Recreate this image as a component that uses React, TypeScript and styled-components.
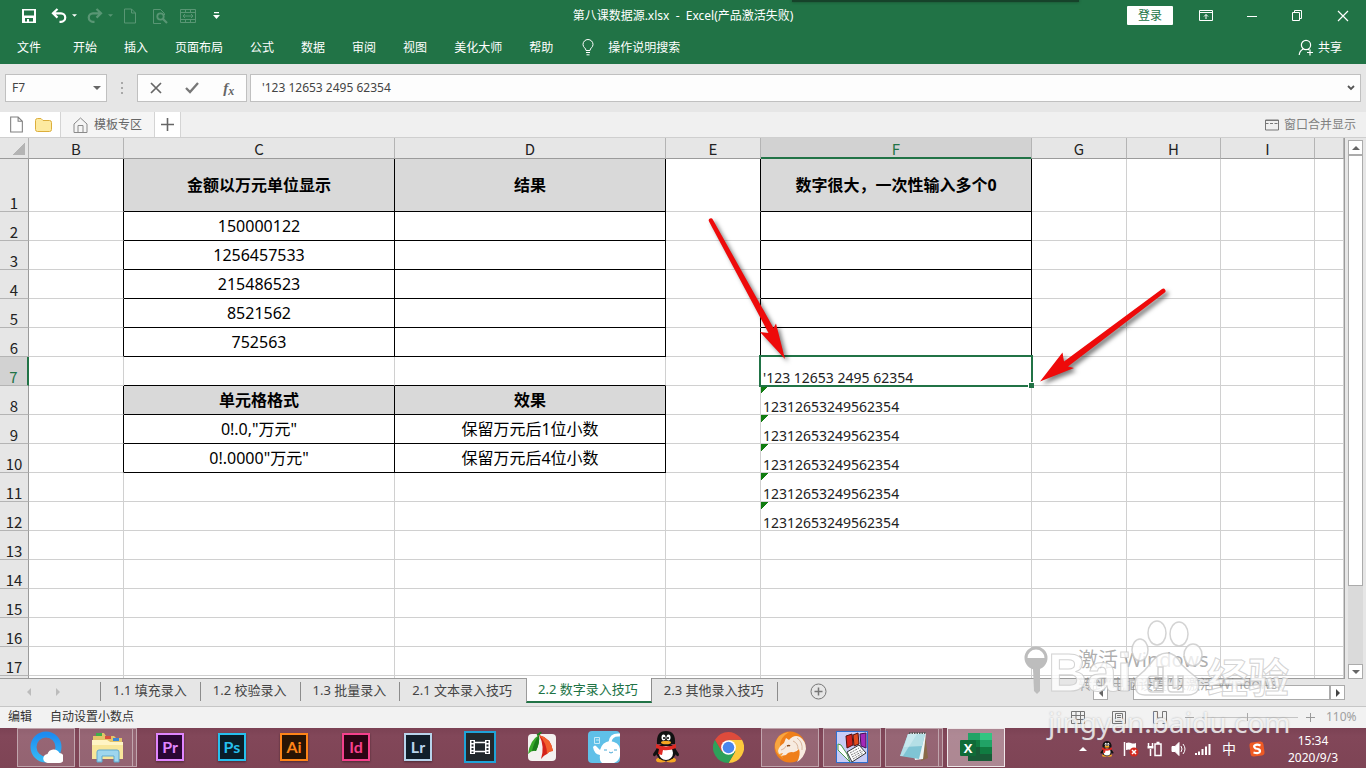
import React from "react";
import styled, { createGlobalStyle, css } from "styled-components";

const sans = '"Noto Sans", "Noto Sans CJK SC", sans-serif';
const green = "#217346";

const Global = createGlobalStyle`
  *, *::before, *::after { box-sizing: border-box; }
  html, body { margin: 0; }
  body { font-family: ${sans}; font-size: 12px; line-height: 16px; overflow: hidden; }
  button, input { font: inherit; color: inherit; }
  button { background: none; border: 0; padding: 0; margin: 0; white-space: nowrap; }
  svg { display: block; flex: none; }
`;

const Screen = styled.div`
  display: flex;
  flex-direction: column;
  height: 100vh;
  position: relative;
  overflow: hidden;
`;

/* ---------- title bar and ribbon tabs ---------- */

const Ribbon = styled.header`
  flex: none;
  background: ${green};
  color: #fff;
`;

const DockedShadow = styled.div`
  position: absolute;
  top: 0;
  left: 58%;
  width: 21%;
  height: 2px;
  background: #16422a;
  box-shadow: 0 0 3px #16422a;
`;

const TitleRow = styled.div`
  display: grid;
  grid-template-columns: 1fr auto 1fr;
  align-items: center;
  height: 31px;
`;

const QuickAccess = styled.div`
  display: flex;
  align-items: center;
  padding-left: 21px;
`;

const QuickButton = styled.button<{ $dim?: boolean; $gap: number }>`
  display: flex;
  align-items: center;
  gap: 5px;
  margin-right: ${(p) => p.$gap}px;
  opacity: ${(p) => (p.$dim ? 0.25 : 1)};
`;

const Title = styled.h1`
  margin: 0;
  font-size: 12px;
  line-height: 16px;
  font-weight: 400;
  white-space: pre;
`;

const WindowControls = styled.div`
  display: flex;
  align-items: center;
  justify-content: flex-end;
  padding-right: 17px;
  gap: 34px;
`;

const SignIn = styled.button`
  background: #fff;
  color: ${green};
  width: 46px;
  height: 19px;
  line-height: 18px;
  border-radius: 1px;
  margin-right: -8px;
`;

const TabRow = styled.nav`
  display: flex;
  align-items: center;
  height: 33px;
  padding: 0 24px 0 17px;
  gap: 27px;
`;

const RibbonTab = styled.button<{ $file?: boolean }>`
  color: #fff;
  margin-right: ${(p) => (p.$file ? 5 : 0)}px;
`;

const IconLabel = styled.button<{ $end?: boolean; $gap: number }>`
  display: flex;
  align-items: center;
  gap: ${(p) => p.$gap}px;
  margin-left: ${(p) => (p.$end ? "auto" : "2px")};
`;

/* ---------- formula bar ---------- */

const FormulaRow = styled.div`
  flex: none;
  display: flex;
  align-items: center;
  height: 48px;
  padding: 0 5px;
  background: #e6e6e6;
  color: #444;
`;

const Field = styled.div<{ $grow?: boolean; $width?: number }>`
  display: flex;
  align-items: center;
  height: 28px;
  background: #fdfdfd;
  border: 1px solid #c0c0c0;
  ${(p) => (p.$grow ? "flex: 1;" : `width: ${p.$width}px;`)}
`;

const FieldInput = styled.input<{ $pad: number }>`
  flex: 1;
  min-width: 0;
  border: 0;
  outline: 0;
  background: none;
  font-size: 12px;
  padding: 0 0 0 ${(p) => p.$pad}px;
`;

const FieldCaret = styled.button`
  padding: 0 5px;
`;

const Grip = styled.span`
  display: grid;
  gap: 3px;
  margin: 0 14px;
  i { width: 2px; height: 2px; background: #a8a8a8; }
`;

const FormulaButtons = styled(Field)`
  justify-content: space-around;
  margin-right: 3px;
`;

/* ---------- document tabs ---------- */

const DocRow = styled.div`
  flex: none;
  display: flex;
  align-items: stretch;
  height: 26px;
  background: #f0f0f0;
  border-bottom: 1px solid #cfcfcf;
  color: #666;
`;

const DocCell = styled.button<{ $width?: number; $white?: boolean }>`
  display: flex;
  align-items: center;
  justify-content: center;
  gap: 6px;
  width: ${(p) => p.$width}px;
  background: ${(p) => (p.$white ? "#fff" : "#f5f5f5")};
  border-right: 1px solid #d4d4d4;
`;

const FileCell = styled.div`
  display: flex;
  align-items: center;
  gap: 10px;
  padding: 0 8px;
  background: #fff;
  border-right: 1px solid #d4d4d4;
`;

const MergeWindows = styled.button`
  display: flex;
  align-items: center;
  gap: 5px;
  margin-left: auto;
  margin-right: 10px;
  color: #808080;
`;

/* ---------- worksheet ---------- */

const SheetArea = styled.main`
  position: relative;
  flex: 1;
  min-height: 0;
  display: flex;
  background: #e6e6e6;
`;

const GridClip = styled.div`
  flex: 1;
  min-width: 0;
  overflow: hidden;
  border-bottom: 1px solid #9b9b9b;
  border-right: 1px solid #9b9b9b;
`;

const Grid = styled.table`
  width: 100%;
  table-layout: fixed;
  border-collapse: separate;
  border-spacing: 0;
  background: #fff;
  td, th { padding: 0; overflow: visible; white-space: nowrap; }
`;

const headFont = css`
  font-family: "Noto Sans CJK SC", sans-serif;
  font-size: 15px;
  line-height: 17px;
  font-weight: 400;
  color: #222;
`;

const ColHead = styled.th<{ $active?: boolean }>`
  ${headFont}
  height: 21px;
  background: ${(p) => (p.$active ? "#d2d2d2" : "#e6e6e6")};
  border-right: 1px solid #b4b4b4;
  border-bottom: 1px solid ${(p) => (p.$active ? green : "#9b9b9b")};
  box-shadow: ${(p) => (p.$active ? `inset 0 -1px ${green}` : "none")};
  color: ${(p) => (p.$active ? green : "#222")};
`;

const Corner = styled(ColHead)`
  background: linear-gradient(135deg, transparent 50%, #b4b4b4 50%) 12px 4px / 13px 13px no-repeat #e6e6e6;
`;

const RowHead = styled.th<{ $active?: boolean }>`
  ${headFont}
  vertical-align: bottom;
  text-align: center;
  background: ${(p) => (p.$active ? "#d2d2d2" : "#e6e6e6")};
  border-bottom: 1px solid #b4b4b4;
  border-right: ${(p) => (p.$active ? `2px solid ${green}` : "1px solid #9b9b9b")};
  color: ${(p) => (p.$active ? green : "#222")};
`;

const Row = styled.tr<{ $tall?: boolean }>`
  height: ${(p) => (p.$tall ? 53 : 29)}px;
`;

type CellProps = { $right?: boolean; $bottom?: boolean; $kind?: string; $flag?: boolean };

const Cell = styled.td<CellProps>`
  position: relative;
  color: #000;
  font-size: 16px;
  line-height: 20px;
  text-align: center;
  vertical-align: middle;
  border-right: 1px solid ${(p) => (p.$right ? "#000" : "#d0d0d0")};
  border-bottom: 1px solid ${(p) => (p.$bottom ? "#000" : "#d0d0d0")};
  ${(p) => p.$kind === "title" && css`background: #d9d9d9; font-weight: 700;`}
  ${(p) =>
    p.$kind === "text" &&
    css`
      && { padding-left: 2px; }
      color: #222;
      font-size: 14px;
      line-height: 15px;
      text-align: left;
      vertical-align: bottom;
    `}
  ${(p) =>
    p.$flag &&
    css`background: linear-gradient(135deg, #107c10 50%, transparent 50%) 0 0 / 8px 8px no-repeat;`}
`;

const Selection = styled.span`
  position: absolute;
  inset: -2px;
  border: 2px solid ${green};
  z-index: 1;
  &::after {
    content: "";
    position: absolute;
    right: -3px;
    bottom: -3px;
    width: 6px;
    height: 6px;
    background: ${green};
    border: solid #fff;
    border-width: 1px 0 0 1px;
  }
`;

const Annotations = styled.svg`
  position: absolute;
  left: 0;
  top: 0;
  z-index: 2;
  filter: drop-shadow(3px 3px 2px rgba(0, 0, 0, 0.5));
`;

const VScroll = styled.div`
  display: flex;
  flex-direction: column;
  width: 21px;
  padding: 2px 3px 0;
`;

const ScrollButton = styled.button`
  flex: none;
  display: grid;
  place-items: center;
  width: 15px;
  height: 15px;
  background: #fff;
  border: 1px solid #ababab;
`;

const VThumb = styled.div`
  flex: 431;
  background: #fff;
  border: 1px solid #ababab;
`;

const VTrack = styled.div`
  flex: 78;
  background: #dadada;
`;

/* ---------- sheet tabs ---------- */

const SheetTabs = styled.div`
  flex: none;
  display: flex;
  align-items: flex-start;
  height: 28px;
  background: #e6e6e6;
  border-bottom: 1px solid #c6c6c6;
`;

const TabNav = styled.div`
  display: flex;
  align-items: center;
  gap: 21px;
  width: 101px;
  height: 19px;
  margin-top: 3px;
  padding-left: 25px;
  border-right: 1px solid #8c8c8c;
`;

const SheetTab = styled.button<{ $active?: boolean; $bare?: boolean }>`
  position: relative;
  font-size: 13px;
  line-height: 16px;
  color: #444;
  height: 19px;
  margin-top: 3px;
  padding: 0 13px 3px 12px;
  border-right: 1px solid ${(p) => (p.$bare ? "transparent" : "#8c8c8c")};
  ${(p) =>
    p.$active &&
    css`
      z-index: 1;
      height: 25px;
      margin-top: -1px;
      color: ${green};
      background: #fff;
      border-left: 1px solid #9b9b9b;
      border-bottom: 2px solid ${green};
      padding: 0 13px 1px 11px;
    `}
`;

const AddSheet = styled.button`
  margin: 4px 0 0 32px;
`;

const HScroll = styled.div`
  display: flex;
  width: 252px;
  margin: 6px 21px 0 auto;
`;

const HTrack = styled.div`
  width: 25px;
`;

const HThumb = styled.div`
  flex: 1;
  background: #fff;
  border: 1px solid #ababab;
`;

/* ---------- status bar ---------- */

const StatusBar = styled.footer`
  flex: none;
  display: flex;
  align-items: center;
  height: 21px;
  padding: 0 8px 1px;
  background: #f2f2f2;
  color: #333;
`;

const StatusText = styled.span`
  margin-right: 18px;
`;

const ViewButtons = styled.div`
  display: flex;
  gap: 27px;
  margin-left: auto;
  margin-right: 18px;
`;

const Zoom = styled.div`
  display: flex;
  align-items: center;
  gap: 8px;
  color: #a0a0a0;
`;

const ZoomSlider = styled.input`
  appearance: none;
  width: 96px;
  height: 12px;
  margin: 0;
  background: linear-gradient(#c4c4c4, #c4c4c4) 0 6px / 100% 1px no-repeat;
  &::-webkit-slider-thumb {
    appearance: none;
    width: 1px;
    height: 8px;
    background: #aaa;
  }
`;

const ZoomValue = styled.span`
  width: 32px;
  margin-left: 3px;
`;

/* ---------- Windows taskbar ---------- */

const Taskbar = styled.div`
  flex: none;
  display: flex;
  height: 40px;
  padding: 0 11px 0 15px;
  background: linear-gradient(#7b4254, #824759 20%, #7e4455);
  color: #fff;
`;

const Task = styled.button<{ $open?: boolean; $front?: boolean; $stack?: boolean }>`
  position: relative;
  display: grid;
  place-items: center;
  width: 58px;
  height: 39px;
  margin: 0 2px;
  padding-bottom: 1px;
  border: 1px solid transparent;
  ${(p) => p.$open && "background: rgba(255,255,255,0.17); border-color: rgba(255,255,255,0.42);"}
  ${(p) => p.$front && "background: rgba(255,255,255,0.36); border-color: rgba(255,255,255,0.8);"}
  ${(p) =>
    p.$stack &&
    css`
      &::after {
        content: "";
        position: absolute;
        top: 0;
        bottom: 0;
        right: 3px;
        border-right: 1px solid rgba(255, 255, 255, 0.42);
      }
    `}
`;

const AdobeTile = styled.span<{ $tint: string; $fill: string }>`
  display: grid;
  place-items: center;
  width: 28px;
  height: 28px;
  background: ${(p) => p.$fill};
  border: 2px solid ${(p) => p.$tint};
  color: ${(p) => p.$tint};
  font-family: Lato, sans-serif;
  font-weight: 700;
  font-size: 16px;
  line-height: 20px;
  padding-bottom: 1px;
  box-shadow: 0 1px 2px rgba(0, 0, 0, 0.4);
`;

const Tray = styled.div`
  display: flex;
  align-items: center;
  margin-left: auto;
  padding-top: 2px;
`;

const TrayItem = styled.button<{ $wide?: boolean }>`
  display: grid;
  place-items: center;
  width: ${(p) => (p.$wide ? 28 : 24)}px;
  height: 24px;
  font-size: 14px;
`;

const Clock = styled.div`
  width: 84px;
  text-align: center;
  line-height: 17px;
`;

/* ---------- watermarks ---------- */

const Activation = styled.div`
  position: absolute;
  right: 64px;
  bottom: 74px;
  display: flex;
  color: rgba(120, 120, 120, 0.6);
  pointer-events: none;
  z-index: 3;
`;

const ActivationText = styled.div`
  margin-left: 30px;
  white-space: nowrap;
  width: 224px;
  font-size: 14px;
  line-height: 20px;
`;

const ActivationTitle = styled.div`
  font-size: 20px;
  line-height: 28px;
`;

const Brand = styled.div`
  position: absolute;
  right: 73px;
  bottom: 28px;
  width: 245px;
  color: rgba(255, 255, 255, 0.8);
  pointer-events: none;
  z-index: 4;
`;

const BrandName = styled.div`
  display: flex;
  align-items: flex-end;
  height: 80px;
  padding-right: 4px;
  margin-bottom: 5px;
  -webkit-text-stroke: 1px rgba(200, 200, 200, 0.8);
`;

const BrandLatin = styled.span`
  font: 700 54px/54px "Liberation Sans", sans-serif;
`;

const BrandHan = styled.span`
  margin-left: auto;
  font: 700 41px/48px "Noto Sans CJK SC", sans-serif;
`;

const BrandUrl = styled.div`
  font-size: 28px;
  line-height: 36px;
  text-shadow: 0 0 2px rgba(120, 120, 120, 0.55);
`;

/* ---------- icons ---------- */

type TriProps = { dir: "up" | "down" | "left" | "right"; size?: number; color?: string };
const triPaths = {
  up: "M0 6 4 2l4 4z",
  down: "M0 2h8L4 6z",
  left: "M6 0v8L2 4z",
  right: "M2 0v8l4-4z",
};
const Tri = ({ dir, size = 8, color = "currentColor" }: TriProps) => (
  <svg width={size} height={size} viewBox="0 0 8 8"><path d={triPaths[dir]} fill={color} /></svg>
);

const SaveIcon = () => (
  <svg width="16" height="16" viewBox="0 0 16 16">
    <path fillRule="evenodd" fill="#fff" d="M1 1h14v14H1zM3 2.500v5h10v-5zM4 10v3.500h2V11h2v2.500h4V10z" />
  </svg>
);
const UndoIcon = ({ flip }: { flip?: boolean }) => (
  <svg width="16" height="16" viewBox="0 0 16 16">
    <g fill="none" stroke="#fff" strokeWidth="2.200" transform={flip ? "matrix(-1 0 0 1 16 0)" : undefined}>
      <path d="M6.500 1 2 5.300l4.500 4.300M2.500 5.300H10a4 4 0 0 1 0 8.500H8.500" />
    </g>
  </svg>
);
const PageIcon = ({ color = "#fff", size = 16 }: { color?: string; size?: number }) => (
  <svg width={size} height={size} viewBox="0 0 16 16" fill="none" stroke={color}>
    <path d="M2.500 1h7l4 4v10h-11zM9.500 1v4h4" />
  </svg>
);
const PreviewIcon = () => (
  <svg width="16" height="16" viewBox="0 0 16 16" fill="none" stroke="#fff">
    <path d="M9 15.500H1.500v-14h7l4 4V7" /><circle cx="8.500" cy="8.500" r="3.200" strokeWidth="1.800" /><path d="m11 11 4 4" strokeWidth="2.200" />
  </svg>
);
const FitIcon = () => (
  <svg width="16" height="16" viewBox="0 0 16 16" fill="none" stroke="#fff">
    <path d="M.5 1.500h15v13H.5zM.5 4.500h15M.5 11.500h15M5.500 1.500v3M10.500 1.500v3M5.500 11.500v3M10.500 11.500v3M3 8h10M5 6 3 8l2 2M11 6l2 2-2 2" />
  </svg>
);
const CustomizeIcon = () => (
  <svg width="7" height="8" viewBox="0 0 7 8" fill="#fff"><path d="M1 0h5v1.200H1zM0 3h7L3.500 7z" /></svg>
);
const RibbonOptionsIcon = () => (
  <svg width="14" height="12" viewBox="0 0 14 12" fill="none" stroke="#fff">
    <path d="M.5.5h13v10H.5zM.5 2.500h13M7 9V4.500M5 6.500l2-2 2 2" />
  </svg>
);
const MinIcon = () => <svg width="11" height="12" viewBox="0 0 11 12"><path d="M0 6.500h10" stroke="#fff" /></svg>;
const RestoreIcon = () => (
  <svg width="11" height="11" viewBox="0 0 11 11" fill="none" stroke="#fff"><path d="M.5 2.500h7v8h-7zM2.500 2.500v-2h7v8h-2" /></svg>
);
const CloseIcon = () => (
  <svg width="12" height="12" viewBox="0 0 12 12"><path d="m1 1 10 10M11 1 1 11" stroke="#fff" strokeWidth="1.200" /></svg>
);
const BulbIcon = () => (
  <svg width="12" height="17" viewBox="0 0 12 17" fill="none" stroke="#fff">
    <path d="M4 11.500C4 9 1 8.500 1 5.500a5 5 0 0 1 10 0c0 3-3 3.500-3 6zM4 13.500h4M4.500 15.800h3" />
  </svg>
);
const ShareIcon = () => (
  <svg width="16" height="17" viewBox="0 0 16 17" fill="none" stroke="#fff" strokeWidth="1.200">
    <circle cx="8" cy="6" r="4.600" /><path d="M1.200 16c.3-3.500 2-5 4-6M10 10l1 1M12 10.500v6M9 13.500h6" />
  </svg>
);
const CancelIcon = () => <svg width="12" height="12" viewBox="0 0 12 12"><path d="m1 1 10 10M11 1 1 11" stroke="#666" strokeWidth="1.700" /></svg>;
const CheckIcon = () => <svg width="14" height="12" viewBox="0 0 14 12"><path d="m1 6 4 4 8-9" fill="none" stroke="#777" strokeWidth="2.300" /></svg>;
const FxGlyph = styled.i`
  font: italic 700 15px/16px "Liberation Serif", serif;
  color: #666;
  sub { font-size: 12px; vertical-align: -2px; line-height: 0; }
`;
const ChevronIcon = () => <svg width="8" height="6" viewBox="0 0 8 6"><path d="m1 1 3 3 3-3" fill="none" stroke="#555" strokeWidth="1.800" /></svg>;
const FolderIcon = () => (
  <svg width="17" height="14" viewBox="0 0 17 14"><path d="M.5 2.500q0-2 2-2h3.500l2 2h6.500q2 0 2 2v7q0 2-2 2h-12q-2 0-2-2z" fill="#fdeaa0" stroke="#dcae3c" /></svg>
);
const HomeIcon = () => (
  <svg width="15" height="16" viewBox="0 0 15 16" fill="none" stroke="#8a8a8a"><path d="m1 7 6.500-6L14 7v8.500H1zM5 15.500v-7h5v7" /></svg>
);
const PlusIcon = () => <svg width="13" height="13" viewBox="0 0 13 13"><path d="M6.500 0v13M0 6.500h13" stroke="#666" strokeWidth="1.600" /></svg>;
const MergeIcon = () => (
  <svg width="14" height="12" viewBox="0 0 14 12" fill="none" stroke="#777"><path d="M.5 1v10h13V1zM.5 1.500h13" /><path d="M.5 4.500h13" strokeDasharray="3 1.500" /></svg>
);
const AddIcon = () => (
  <svg width="17" height="17" viewBox="0 0 17 17" fill="none" stroke="#777"><circle cx="8.500" cy="8.500" r="7.500" /><path d="M8.500 4.500v8M4.500 8.500h8" strokeWidth="1.500" /></svg>
);
const NormalViewIcon = () => (
  <svg width="14" height="13" viewBox="0 0 14 13" fill="none" stroke="#777"><path d="M.5.5h13v12H.5zM.5 4.500h13M.5 8.500h13M5 .5v12M9.500.5v12" /></svg>
);
const LayoutViewIcon = () => (
  <svg width="14" height="13" viewBox="0 0 14 13" fill="none" stroke="#777"><path d="M.5.5h13v12H.5zM3.500 2.500h7v8h-7zM5 4.500h4M5 6.500h4M5 8.500h4" /></svg>
);
const BreakViewIcon = () => (
  <svg width="14" height="13" viewBox="0 0 14 13" fill="none" stroke="#777"><path d="M.5 12V.5h4V7h5V.5h4V12M.5 12.500h4M9.500 12.500h4" /></svg>
);

const CloudRingIcon = () => (
  <svg width="34" height="34" viewBox="0 0 34 34">
    <defs><linearGradient id="ring" x2="0" y2="1"><stop offset="0" stopColor="#1d8cf0" /><stop offset="1" stopColor="#35b8f5" /></linearGradient></defs>
    <circle cx="17" cy="17" r="12.500" fill="none" stroke="url(#ring)" strokeWidth="6" />
    <path d="M19 33a4.500 4.500 0 0 1-.5-9 6.500 6.500 0 0 1 12-1 5 5 0 0 1-.5 10z" fill="#fff" />
  </svg>
);
const ExplorerIcon = () => (
  <svg width="34" height="32" viewBox="0 0 34 32">
    <path d="M2 5h3V2h8l2 3h8l2 2h6v20H2z" fill="#e4c368" />
    <path d="M5 2h6v3H5z" fill="#3fae49" /><path d="M14 5h6v3h-6z" fill="#d9503f" /><path d="M22 7h6v3h-6z" fill="#3c87d4" />
    <path d="M1 9h15l3 2h13v17H1z" fill="#f8e69a" /><path d="M1 9h15l3 2h13v3H1z" fill="#fff4c4" />
    <path d="M6 31V21q0-2 2-2h18q2 0 2 2v10h-5v-6H11v6z" fill="#9ed6ee" stroke="#5fa9cf" />
  </svg>
);
const FilmIcon = () => (
  <svg width="32" height="32" viewBox="0 0 32 32">
    <rect x="1" y="1" width="30" height="30" fill="#22282c" stroke="#1fa3d8" strokeWidth="2" />
    <path d="M8 11.500h16M8 20.500h16" stroke="#fff" strokeWidth="1.500" />
    <path d="M6 9h5v14H6zM21 9h5v14h-5z" fill="#fff" />
    <path d="M8.500 10v12M23.500 10v12" stroke="#22282c" strokeWidth="2" strokeDasharray="2 1.500" />
  </svg>
);
const UmbrellaIcon = () => (
  <svg width="30" height="30" viewBox="0 0 30 30">
    <rect x="1" y="2" width="28" height="27" rx="4" fill="#f4f2f0" />
    <path d="M12 3Q3 8 1 22q4-4 8-3 4-8 3-16z" fill="#3aa82c" />
    <path d="M12 3Q7 10 5 19q2-1 4 0 4-8 3-16z" fill="#1d7d1c" />
    <path d="M12 3q12 3 14 16-4 0-6 3-3 1-6 5Q18 14 12 3z" fill="#d4231a" />
    <path d="M12 3q12 3 14 16-4 0-6 3Q20 11 12 3z" fill="#f2602c" />
    <path d="M10 3q3-1 4-3" stroke="#1d7d1c" strokeWidth="2" fill="none" />
  </svg>
);
const BlueGhostIcon = () => (
  <svg width="32" height="32" viewBox="0 0 32 32">
    <rect width="32" height="32" rx="4" fill="#5fc0e8" />
    <path d="M22 11q1-8 10-7" fill="none" stroke="#fff" strokeWidth="3" />
    <path d="M5 16q2-3 4 0l3 3q2-8 10-9 9 1 10 8v7q-1 5-6 7H14q-3-3-2-8-6-1-7-8z" fill="#fff" />
    <path d="M16 19h3M26 19h3M21 21q2 2 4 0" stroke="#4aa9d6" fill="none" />
    <path d="M6.500 6.500h5v6h-5zM8 9h3" stroke="#c6ebf8" fill="none" />
  </svg>
);
const PenguinIcon = ({ size = 32 }: { size?: number }) => (
  <svg width={size} height={size} viewBox="0 0 32 32">
    <path d="M7 17 3 23q0 3 2 2l3-3M25 17l4 6q0 3-2 2l-3-3" fill="#111" />
    <ellipse cx="11" cy="29" rx="5" ry="2.500" fill="#f5a623" /><ellipse cx="21" cy="29" rx="5" ry="2.500" fill="#f5a623" />
    <ellipse cx="16" cy="21" rx="10" ry="9" fill="#111" /><ellipse cx="16" cy="22" rx="7" ry="7" fill="#fff" />
    <path d="M7 13Q6 0 16 0t9 13z" fill="#111" />
    <ellipse cx="13.500" cy="6.500" rx="2" ry="3" fill="#fff" /><ellipse cx="18.500" cy="6.500" rx="2" ry="3" fill="#fff" />
    <circle cx="14" cy="7" r="1" /><circle cx="18" cy="7" r="1" />
    <ellipse cx="16" cy="11.500" rx="5" ry="1.800" fill="#f5a623" />
    <path d="M6 13q10 5 20 0v4q-7 3-13 2l-1 5-4-1 1-5-3-1z" fill="#e02a24" />
  </svg>
);
const ChromeIcon = () => (
  <svg width="31" height="31" viewBox="0 0 32 32">
    <path d="M16 16V8h13.900A16 16 0 0 1 16 32l7-12z" fill="#fcc93c" />
    <path d="M16 16l7 4-7 12A16 16 0 0 1 2.100 8l7 12z" fill="#2da15a" />
    <path d="M16 8h13.900L28 5.500Q22 0 16 0 7 0 2.100 8l7 12L16 16z" fill="#de4b3c" />
    <circle cx="16" cy="16" r="7.600" fill="#fff" /><circle cx="16" cy="16" r="6" fill="#4a86ee" />
  </svg>
);
const CheetahIcon = () => (
  <svg width="34" height="34" viewBox="0 0 34 34">
    <circle cx="17" cy="17" r="15.500" fill="#ef7f1a" />
    <path d="M2 14Q5 3 16 2q-8 5-9 12 0 8 3 14-9-5-8-14z" fill="#f8a640" />
    <path d="M5 21q1-5 6-8l2-5 3 2q5-6 11-3 6 4 6 12-2 9-9 13 4-7 2-13-3 4-7 3-4 0-6 3l-5 1 2-3-4 1z" fill="#f7ebe0" />
    <path d="M8 20q4-1 5-4M20 11q5 2 5 8M24 8q6 4 5 12" stroke="#d9b49a" fill="none" />
    <path d="M14 16q2-1 3 0" stroke="#8a4a1a" strokeWidth="1.500" fill="none" />
  </svg>
);
const BooksIcon = () => (
  <svg width="32" height="32" viewBox="0 0 32 32">
    <rect x=".5" y=".5" width="31" height="31" fill="#c9cdf6" stroke="#2f6fd0" />
    <path d="m10 5 6-2 1 11-6 3z" fill="#d4221c" stroke="#501010" /><path d="m17 4 5-2 1 11-5 2z" fill="#e24b1c" stroke="#501010" /><path d="m24 3 6-1v15l-5-2z" fill="#a428b8" stroke="#401050" />
    <path d="m2 13 3 1 6 9 3 8L2 19z" fill="#fff" stroke="#4c9a4a" />
    <path d="m11 21 12-7 7 8-14 9z" fill="#fff" stroke="#333" />
    <path d="m14 22 9-5M15 24l10-5M16 26l11-6M17 28l10-6" stroke="#777" strokeDasharray="2 1" />
  </svg>
);
const NotepadIcon = () => (
  <svg width="34" height="32" viewBox="0 0 34 32">
    <path d="m28 3 3 24-7 3z" fill="#8a6a48" /><path d="M12 2h17l-3 26-8 1z" fill="#eef4f4" />
    <path d="M11 3h17l-6 25-19-3z" fill="#7fc4d4" /><path d="M11 3h17l-3 12-18 1z" fill="#b4dfe6" />
    <path d="m11 3 9 0-14 22-3 0z" fill="#d5eff3" opacity=".6" /><path d="M12 2h17" stroke="#5a5a5a" strokeWidth="2" strokeDasharray="1.500 1" />
  </svg>
);
const ExcelMark = styled.span`
  position: relative;
  display: block;
  b {
    position: absolute;
    left: 0;
    top: 8px;
    width: 16px;
    font: 700 13px/15px "Open Sans", sans-serif;
    text-align: center;
    color: #fff;
  }
`;
const ExcelIcon = () => (
  <ExcelMark>
    <svg width="32" height="28" viewBox="0 0 32 28">
      <path d="M8 0h12v7H8z" fill="#21a366" /><path d="M20 0h12v7H20z" fill="#33c481" />
      <path d="M8 7h12v7H8z" fill="#107c41" /><path d="M20 7h12v7H20z" fill="#21a366" />
      <path d="M8 14h12v14H8z" fill="#185c37" /><path d="M20 14h12v7H20z" fill="#107c41" /><path d="M20 21h12v7H20z" fill="#185c37" />
      <rect y="7" width="16" height="16" rx="1" fill="#0f6b38" />
    </svg>
    <b>X</b>
  </ExcelMark>
);

const FlagIcon = () => (
  <svg width="16" height="16" viewBox="0 0 16 16">
    <path d="M1.500 1v14" stroke="#fff" strokeWidth="1.500" /><path d="M3 2q3-1 5 0t5 0v7q-3 1-5 0T3 9z" fill="#fff" />
    <circle cx="11" cy="11" r="4.500" fill="#d42a20" /><path d="m9 9 4 4M13 9l-4 4" stroke="#fff" strokeWidth="1.500" />
  </svg>
);
const BatteryIcon = () => (
  <svg width="16" height="16" viewBox="0 0 16 16" fill="none" stroke="#fff" strokeWidth="1.500">
    <path d="M8 3h6v11.500H8zM9.500 1.500h3M3.500 8v7M1.500 2v3M5.500 2v3" /><path d="M.5 5h6v2.500H.5z" fill="#fff" stroke="none" />
  </svg>
);
const SpeakerIcon = () => (
  <svg width="16" height="16" viewBox="0 0 16 16" fill="none" stroke="#fff">
    <path d="M1 5.500h3l4-4v13l-4-4H1z" fill="#fff" /><path d="M10 5q2 3 0 6M12 3q4 5 0 10" />
  </svg>
);
const SignalIcon = () => (
  <svg width="16" height="14" viewBox="0 0 16 14" fill="#fff"><path d="M0 11h2v2H0zM3 9.500h2V13H3zM6.500 7h2v6h-2zM10 4.500h2V13h-2zM13.500 2h2v11h-2z" /></svg>
);
const SogouIcon = () => (
  <svg width="16" height="16" viewBox="0 0 16 16">
    <rect x="1" y="1" width="14" height="14" rx="3" fill="#ee5a24" transform="rotate(-8 8 8)" />
    <path d="M11.500 4.500Q8 3 6 4.200T6.500 7.500q5 .5 4.500 3T4.500 11.500" fill="none" stroke="#fff" strokeWidth="2.200" />
  </svg>
);
const KeyIcon = () => (
  <svg width="24" height="48" viewBox="0 0 24 48" fill="none">
    <circle cx="12" cy="12" r="10" fill="#fff" stroke="#bdbdbd" strokeWidth="3" />
    <path d="M2 12h20a10 10 0 0 1-20 0z" fill="#bdbdbd" />
    <path d="M9 23h7v22l-3 3-3-3z" fill="#bdbdbd" />
  </svg>
);
const PawIcon = styled.svg`
  position: absolute;
  left: 82px;
  top: 0;
`;

/* ---------- data ---------- */

const ribbonTabs = ["文件", "开始", "插入", "页面布局", "公式", "数据", "审阅", "视图", "美化大师", "帮助"];
const columns = ["B", "C", "D", "E", "F", "G", "H", "I", ""];
const widths = [29, 95, 271, 271, 95, 271, 95, 94, 94];
const lastNumberedRow = 17;
const sheets = ["1.1 填充录入", "1.2 校验录入", "1.3 批量录入", "2.1 文本录入技巧", "2.2 数字录入技巧", "2.3 其他录入技巧"];
const values: Record<string, string> = {
  C1: "金额以万元单位显示", D1: "结果", F1: "数字很大，一次性输入多个0",
  C2: "150000122", C3: "1256457533", C4: "215486523", C5: "8521562", C6: "752563",
  F7: "'123 12653 2495 62354",
  C8: "单元格格式", D8: "效果",
  C9: '0!.0,"万元"', D9: "保留万元后1位小数",
  C10: '0!.0000"万元"', D10: "保留万元后4位小数",
  F8: "12312653249562354", F9: "12312653249562354", F10: "12312653249562354", F11: "12312653249562354", F12: "12312653249562354",
};
const titles = ["C1", "D1", "F1", "C8", "D8"];

const inTable = (row: number) => row <= 6 || (row >= 8 && row <= 10);

const cellStyle = (col: string, row: number): CellProps => {
  const cd = col === "C" || col === "D";
  return {
    $right: (inTable(row) && (col === "B" || cd)) || (row <= 6 && (col === "E" || col === "F")),
    $bottom: (cd && row <= 10) || (col === "F" && row <= 6),
    $kind: titles.includes(col + row) ? "title" : col === "F" && row >= 7 ? "text" : undefined,
    $flag: col === "F" && row >= 8 && row <= 12,
  };
};

const adobe = [
  ["Pr", "#e085ff", "#2a0634"],
  ["Ps", "#26c0ee", "#0a1e28"],
  ["Ai", "#ff8418", "#2a1404"],
  ["Id", "#f5408c", "#2c0414"],
  ["Lr", "#b8d4ec", "#101e2a"],
];

export default function App() {
  return (
    <Screen>
      <Global />
      <Ribbon>
        <TitleRow>
          <QuickAccess>
            <QuickButton $gap={14} aria-label="保存"><SaveIcon /></QuickButton>
            <QuickButton $gap={10} aria-label="撤消"><UndoIcon /><Tri dir="down" size={5} /></QuickButton>
            <QuickButton $gap={9} $dim aria-label="恢复"><UndoIcon flip /><Tri dir="down" size={5} /></QuickButton>
            <QuickButton $gap={14} $dim aria-label="新建"><PageIcon /></QuickButton>
            <QuickButton $gap={12} $dim aria-label="打印预览"><PreviewIcon /></QuickButton>
            <QuickButton $gap={17} $dim aria-label="合并"><FitIcon /></QuickButton>
            <QuickButton $gap={0} aria-label="自定义"><CustomizeIcon /></QuickButton>
          </QuickAccess>
          <Title>第八课数据源.xlsx  -  Excel(产品激活失败)</Title>
          <WindowControls>
            <SignIn>登录</SignIn>
            <button aria-label="功能区选项"><RibbonOptionsIcon /></button>
            <button aria-label="最小化"><MinIcon /></button>
            <button aria-label="还原"><RestoreIcon /></button>
            <button aria-label="关闭"><CloseIcon /></button>
          </WindowControls>
        </TitleRow>
        <TabRow>
          {ribbonTabs.map((t, i) => <RibbonTab key={t} $file={i === 0}>{t}</RibbonTab>)}
          <IconLabel $gap={14}><BulbIcon />操作说明搜索</IconLabel>
          <IconLabel $gap={4} $end><ShareIcon />共享</IconLabel>
        </TabRow>
      </Ribbon>
      <DockedShadow />

      <FormulaRow>
        <Field $width={102}>
          <FieldInput $pad={6} aria-label="名称框" defaultValue="F7" />
          <FieldCaret aria-label="展开名称框"><Tri dir="down" color="#666" /></FieldCaret>
        </Field>
        <Grip><i /><i /><i /></Grip>
        <FormulaButtons $width={110}>
          <button aria-label="取消"><CancelIcon /></button>
          <button aria-label="输入"><CheckIcon /></button>
          <button aria-label="插入函数"><FxGlyph>f<sub>x</sub></FxGlyph></button>
        </FormulaButtons>
        <Field $grow>
          <FieldInput $pad={11} aria-label="编辑栏" defaultValue="'123 12653 2495 62354" />
          <FieldCaret aria-label="展开编辑栏"><ChevronIcon /></FieldCaret>
        </Field>
      </FormulaRow>

      <DocRow>
        <FileCell>
          <PageIcon color="#808080" size={17} />
          <FolderIcon />
        </FileCell>
        <DocCell $width={94}><HomeIcon />模板专区</DocCell>
        <DocCell $width={26} $white aria-label="新建标签"><PlusIcon /></DocCell>
        <MergeWindows><MergeIcon />窗口合并显示</MergeWindows>
      </DocRow>

      <SheetArea>
        <GridClip>
          <Grid>
            <colgroup>
              {widths.map((w, i) => <col key={i} width={w} />)}
              <col />
            </colgroup>
            <thead>
              <tr>
                <Corner aria-label="全选" />
                {columns.map((c) => <ColHead key={c} $active={c === "F"}>{c}</ColHead>)}
              </tr>
            </thead>
            <tbody>
              {Array.from({ length: lastNumberedRow + 1 }, (_, i) => i + 1).map((r) => (
                <Row key={r} $tall={r === 1}>
                  <RowHead $active={r === 7}>{r <= lastNumberedRow ? r : null}</RowHead>
                  {columns.map((c) => (
                    <Cell key={c} {...cellStyle(c, r)}>
                      {values[c + r]}
                      {c + r === "F7" && <Selection />}
                    </Cell>
                  ))}
                </Row>
              ))}
            </tbody>
          </Grid>
        </GridClip>
        <VScroll>
          <ScrollButton aria-label="向上滚动"><Tri dir="up" color="#666" /></ScrollButton>
          <VThumb />
          <VTrack />
          <ScrollButton aria-label="向下滚动"><Tri dir="down" color="#666" /></ScrollButton>
        </VScroll>
        <Annotations width="1200" height="270" viewBox="0 138 1200 270" fill="#ee0a0a">
          <path d="M709 221.500a2 2 0 0 1 3.800-2L773.500 328l2.500-4.500L785 359l-25-27 8.500 1z" />
          <path d="M1162 289a2 2 0 0 1 2.500 3.800L1068 366.500l6 1.500-34 13.500 22.500-29 1.500 9z" />
        </Annotations>
      </SheetArea>

      <SheetTabs>
        <TabNav><Tri dir="left" color="#bcbcbc" /><Tri dir="right" color="#bcbcbc" /></TabNav>
        {sheets.map((s, i) => <SheetTab key={s} $active={i === 4} $bare={i === 3}>{s}</SheetTab>)}
        <AddSheet aria-label="新工作表"><AddIcon /></AddSheet>
        <HScroll>
          <ScrollButton aria-label="向左滚动"><Tri dir="left" color="#666" /></ScrollButton>
          <HTrack />
          <HThumb />
          <ScrollButton aria-label="向右滚动"><Tri dir="right" color="#444" /></ScrollButton>
        </HScroll>
      </SheetTabs>

      <StatusBar>
        <StatusText>编辑</StatusText>
        <StatusText>自动设置小数点</StatusText>
        <ViewButtons>
          <button aria-label="普通"><NormalViewIcon /></button>
          <button aria-label="页面布局"><LayoutViewIcon /></button>
          <button aria-label="分页预览"><BreakViewIcon /></button>
        </ViewButtons>
        <Zoom>
          <button aria-label="缩小"><svg width="9" height="9"><path d="M0 4.500h9" stroke="#aaa" /></svg></button>
          <ZoomSlider type="range" aria-label="缩放" min={0} max={100} defaultValue={47} />
          <button aria-label="放大"><svg width="9" height="9"><path d="M0 4.500h9M4.500 0v9" stroke="#999" /></svg></button>
          <ZoomValue>110%</ZoomValue>
        </Zoom>
      </StatusBar>

      <Taskbar>
        <Task $open aria-label="浏览器"><CloudRingIcon /></Task>
        <Task $open $stack aria-label="资源管理器"><ExplorerIcon /></Task>
        {adobe.map(([name, tint, fill]) => (
          <Task key={name}><AdobeTile $tint={tint} $fill={fill}>{name}</AdobeTile></Task>
        ))}
        <Task aria-label="视频"><FilmIcon /></Task>
        <Task aria-label="截图"><UmbrellaIcon /></Task>
        <Task aria-label="助手"><BlueGhostIcon /></Task>
        <Task aria-label="QQ"><PenguinIcon /></Task>
        <Task aria-label="Chrome"><ChromeIcon /></Task>
        <Task $open aria-label="猎豹"><CheetahIcon /></Task>
        <Task $open aria-label="书籍"><BooksIcon /></Task>
        <Task $open $stack aria-label="记事本"><NotepadIcon /></Task>
        <Task $open $front><ExcelIcon /></Task>
        <Tray>
          <TrayItem aria-label="显示隐藏的图标"><Tri dir="up" color="#fff" /></TrayItem>
          <TrayItem aria-label="QQ"><PenguinIcon size={16} /></TrayItem>
          <TrayItem aria-label="操作中心"><FlagIcon /></TrayItem>
          <TrayItem aria-label="电源"><BatteryIcon /></TrayItem>
          <TrayItem aria-label="音量"><SpeakerIcon /></TrayItem>
          <TrayItem aria-label="网络"><SignalIcon /></TrayItem>
          <TrayItem $wide>中</TrayItem>
          <TrayItem $wide aria-label="搜狗输入法"><SogouIcon /></TrayItem>
          <Clock>15:34<br />2020/9/3</Clock>
        </Tray>
      </Taskbar>

      <Activation>
        <KeyIcon />
        <ActivationText>
          <ActivationTitle>激活 Windows</ActivationTitle>
          转到“电脑设置”以激活 Windows。
        </ActivationText>
      </Activation>
      <Brand>
        <BrandName>
          <BrandLatin>Bai</BrandLatin>
          <PawIcon width="74" height="80" viewBox="0 0 74 80" fill="rgba(255,255,255,0.75)" stroke="rgba(200,200,200,0.8)" strokeWidth="1.500">
            <ellipse cx="27" cy="14" rx="9" ry="12" /><ellipse cx="49" cy="15" rx="9" ry="12" />
            <ellipse cx="10" cy="31" rx="8" ry="11" /><ellipse cx="63" cy="36" rx="9" ry="11" />
            <path fillRule="evenodd" d="M37 34q9 0 14 11 8 8 16 14 6 16-9 17H15Q2 76 6 59q9-7 15-15 7-10 16-10zM28 48v9h-6q-4 0-4 4v8q0 4 4 4h11V48zm-4 14h4v7h-4zM38 57v12q0 4 4 4h11V57h-5v12h-5V57z" />
          </PawIcon>
          <BrandHan>经验</BrandHan>
        </BrandName>
        <BrandUrl>jingyan.baidu.com</BrandUrl>
      </Brand>
    </Screen>
  );
}
